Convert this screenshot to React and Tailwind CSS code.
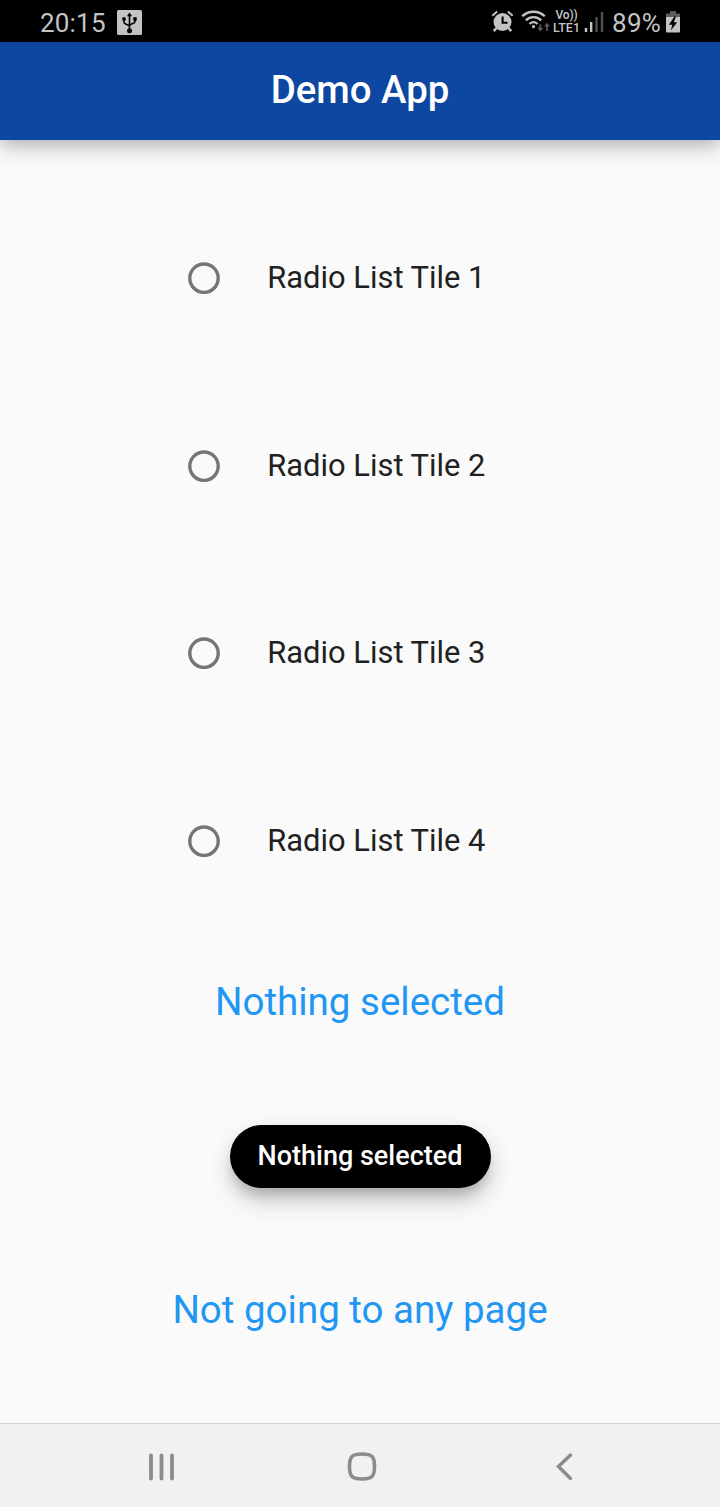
const options = ['Radio List Tile 1', 'Radio List Tile 2', 'Radio List Tile 3', 'Radio List Tile 4'];

function UsbIcon() {
  return (
    <svg className="ml-[11px] mt-[10px] h-[25px] w-[25px] shrink-0" viewBox="0 0 25 25" fill="none">
      <rect width="25" height="25" rx="1.5" fill="#c4c4c4" />
      <path d="M12.5 5v15M7 9.5v2.7c0 2.6 5.5 2 5.5 4.6M18 9v2.500c0 2.600-5.500 2-5.500 4.600" stroke="#000" strokeWidth="1.6" />
      <path d="M12.5 2.500l2.600 3.700H9.900z" fill="#000" />
      <circle cx="12.5" cy="20.700" r="2.500" fill="#000" />
      <circle cx="7" cy="9" r="1.9" fill="#000" />
      <path d="M16.300 7.200h3.400v3.500h-3.400z" fill="#000" />
    </svg>
  );
}

function AlarmIcon() {
  return (
    <svg className="mt-[10px] h-[23px] w-[23px] shrink-0" viewBox="0 0 23 23" fill="none">
      <circle cx="11.5" cy="12" r="9" fill="#c4c4c4" />
      <path d="M1.3 5.7L6.2 1.6M21.7 5.7L16.800 1.6" stroke="#c4c4c4" strokeWidth="2" />
      <path d="M5.5 18L2.8 21.2M17.5 18l2.7 3.2" stroke="#c4c4c4" strokeWidth="2.6" />
      <path d="M11.6 6.5v6.3h5" stroke="#000" strokeWidth="2.1" />
    </svg>
  );
}

function WifiIcon() {
  return (
    <svg className="ml-[7px] mt-[10px] h-[24px] w-[30px] shrink-0" viewBox="0 0 30 24" fill="none">
      <path d="M1.200 6.3C7.4.2 17.600.2 23.800 6.3M4.8 10.3c4.500-4.200 10.900-4.200 15.400 0M8.500 14c2.400-2.200 5.600-2.200 8 0" stroke="#c4c4c4" strokeWidth="2.3" />
      <circle cx="12.5" cy="16.600" r="1.6" fill="#c4c4c4" />
      <path d="M19.300 14.500v5M26 21v-5.500" stroke="#5e5e5e" strokeWidth="1.7" />
      <path d="M16.300 17.800h6l-3 3.800zM23 16.500h6l-3-3.800z" fill="#5e5e5e" />
    </svg>
  );
}

function SignalIcon() {
  return (
    <svg className="ml-[4px] mt-[11px] h-[22px] w-[20px] shrink-0" viewBox="0 0 20 22">
      <path d="M.800 17h2.400v4H.800zM6 11h2.400v10H6z" fill="#c4c4c4" />
      <path d="M11.300 6h2.400v15h-2.400zM16.800 1h2.400v20h-2.400z" fill="#505050" />
    </svg>
  );
}

function BatteryIcon() {
  return (
    <svg className="ml-[4px] mt-[11px] h-[22px] w-[14px] shrink-0" viewBox="0 0 14 22">
      <path d="M4 0h6v2.500h4V7H0V2.500h4z" fill="#5b5b5b" />
      <path d="M0 6h14v14.500q0 1-1 1H1q-1 0-1-1z" fill="#c4c4c4" />
      <path d="M8.500 5.500L2.800 13.800h3.500L4.800 19.500l6.400-8.300H7.800L10 5.500z" fill="#000" />
    </svg>
  );
}

export default function App() {
  return (
    <div className="flex h-[1507px] w-[720px] flex-col overflow-hidden bg-[#fafafa] font-[Roboto,sans-serif]">
      <div className="flex h-[42px] shrink-0 items-start justify-between bg-black pl-[40px] pr-[40px] text-[#c4c4c4]">
        <div className="flex">
          <span className="mt-[7px] w-[66px] whitespace-nowrap text-[26px] leading-[32px] tracking-[0.2px]">20:15</span>
          <UsbIcon />
        </div>
        <div className="flex">
          <AlarmIcon />
          <WifiIcon />
          <div className="ml-[2px] mt-[9px] flex w-[27px] flex-col items-center whitespace-nowrap font-medium">
            <span className="text-[12px] leading-[13px] tracking-[-0.2px]">Vo))</span>
            <span className="text-[12.5px] leading-[12px]">LTE1</span>
          </div>
          <SignalIcon />
          <span className="ml-[8px] mt-[7px] w-[50px] whitespace-nowrap text-[26px] leading-[32px] tracking-[0.3px]">89%</span>
          <BatteryIcon />
        </div>
      </div>

      <header className="flex h-[98px] shrink-0 items-center justify-center bg-[#0d47a1] pb-[2px] shadow-[0_4px_14px_rgba(0,0,0,0.16),0_8px_24px_rgba(0,0,0,0.16)]">
        <h1 className="text-[38.4px] font-medium leading-[46px] text-white">Demo App</h1>
      </header>

      <main className="flex flex-1 flex-col items-center pt-[44.4px]">
        <div className="flex flex-col">
          {options.map((label) => (
            <label key={label} className="flex h-[187.5px] w-[343.5px] items-center">
              <svg className="h-[32px] w-[32px] shrink-0" viewBox="0 0 32 32" fill="none">
                <circle cx="16" cy="16.2" r="14.2" stroke="#757575" strokeWidth="3.4" />
              </svg>
              <span className="ml-[47px] whitespace-nowrap text-[30.9px] leading-[36px] text-[#212121]">{label}</span>
            </label>
          ))}
        </div>
        <p className="mt-[44.6px] text-[38.5px] leading-[46px] text-[#2196f3]">Nothing selected</p>
        <button className="mt-[100px] flex h-[63px] w-[261px] items-center justify-center rounded-full bg-black text-[27px] font-medium text-white shadow-[0_10px_12px_-4px_rgba(0,0,0,0.18),0_14px_24px_rgba(0,0,0,0.16),0_4px_28px_rgba(0,0,0,0.05)]">
          Nothing selected
        </button>
        <p className="mt-[99px] text-[38.5px] leading-[46px] text-[#2196f3]">Not going to any page</p>
      </main>

      <nav className="flex h-[84px] shrink-0 items-center border-t border-[#d5d5d5] bg-[#f1f1f1] pl-[147px] text-[#8c8c8c]">
        <svg className="h-[30px] w-[30px]" viewBox="0 0 30 30" fill="none" stroke="currentColor" strokeWidth="3.800" strokeLinecap="round">
          <path d="M4 4.500v23M14.500 4.500v23M25 4.500v23" />
        </svg>
        <svg className="ml-[170px] h-[30px] w-[30px]" viewBox="0 0 30 30" fill="none" stroke="currentColor" strokeWidth="3.600">
          <path d="M15 3C25 3 27.500 5.500 27.500 15.500S25 28 15 28 2.500 25.500 2.500 15.500 5 3 15 3z" />
        </svg>
        <svg className="ml-[177px] h-[30px] w-[20px]" viewBox="0 0 20 30" fill="none" stroke="currentColor" strokeWidth="3.400" strokeLinecap="round">
          <path d="M16.500 4L4.500 15.500 16.500 27.500" />
        </svg>
      </nav>
    </div>
  );
}
